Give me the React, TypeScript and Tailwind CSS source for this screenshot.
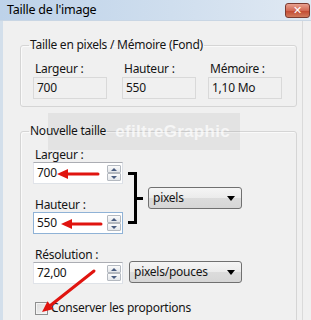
import React from "react";

function Spinner() {
  return (
    <div className="flex flex-col mr-[1px]">
      {[0, 1].map((i) => (
        <div
          key={i}
          className="w-[14px] h-[8px] border border-[#b4b9c0] rounded-[1px] bg-[linear-gradient(#fbfbfb,#e3e6ea)] flex items-center justify-center"
        >
          {i === 0 ? (
            <div className="w-0 h-0 border-l-[3px] border-r-[3px] border-b-[3px] border-l-transparent border-r-transparent border-b-[#4a5d80]" />
          ) : (
            <div className="w-0 h-0 border-l-[3px] border-r-[3px] border-t-[3px] border-l-transparent border-r-transparent border-t-[#4a5d80]" />
          )}
        </div>
      ))}
    </div>
  );
}

function SpinInput({ value, focused }: { value: string; focused?: boolean }) {
  return (
    <div
      className={
        focused
          ? "w-[90px] h-[22px] border border-[#8fb2d6] bg-white flex items-center justify-between"
          : "w-[90px] h-[22px] border border-[#abadb3] border-b-[#dfe3e8] border-l-[#e2e3ea] border-r-[#dbdfe6] bg-white flex items-center justify-between"
      }
    >
      <span className="pl-[3px] leading-none">{value}</span>
      <Spinner />
    </div>
  );
}

function Select({ label, w }: { label: string; w: string }) {
  return (
    <div
      className={
        w +
        " h-[22px] border border-[#707070] rounded-[3px] bg-[linear-gradient(#f5f5f5,#ebebeb_50%,#dcdcdc_51%,#d6d6d6)] flex items-center justify-between px-[4px]"
      }
    >
      <span className="leading-none">{label}</span>
      <div className="w-0 h-0 mr-[2px] border-l-[4px] border-r-[4px] border-t-[5px] border-l-transparent border-r-transparent border-t-black" />
    </div>
  );
}

export default function App() {
  return (
    <div className="relative w-[311px] h-[320px] overflow-hidden bg-[#f0f0f0] font-['Noto_Sans',sans-serif] text-[12px] tracking-[-0.25px] text-[#151515]">
      {/* Title bar */}
      <div className="h-[21px] flex items-center pl-[7px] pr-[1px] bg-[linear-gradient(90deg,#bdd2e9,#cfdeee_55%,#e0e9f3)] border-b border-[#c9d6e4]">
        <span className="leading-none text-black text-[12.5px]">Taille de l'image</span>
        <div className="ml-auto w-[25px] h-[15px] rounded-[3px] border border-[#7a3a30] bg-[linear-gradient(#e8a08f,#d26a55_50%,#c2462f_51%,#d07a5c)] flex items-center justify-center">
          <span className="text-white font-bold text-[11px] leading-none font-['DejaVu_Sans',sans-serif]">✕</span>
        </div>
      </div>

      {/* Body */}
      <div className="flex h-[299px]">
        <div className="w-[3px] bg-[#d3dfeb]" />
        <div className="w-[299px] pl-[17px]">
          {/* Group 1 */}
          <fieldset className="mt-[16px] w-[277px] border border-[#d5d5d5] rounded-[3px] shadow-[inset_1px_1px_0_#fafafa]">
            <legend className="ml-[8px] px-[1px] leading-[16px]">
              Taille en pixels / Mémoire (Fond)
            </legend>
            <div className="pl-[12px] pt-[8px] pb-[7px] grid grid-cols-[89px_86px_74px]">
              {[
                ["Largeur :", "700"],
                ["Hauteur :", "550"],
                ["Mémoire :", "1,10 Mo"],
              ].map(([l, v]) => (
                <div key={l}>
                  <div className="pl-[2px] leading-[16px]">{l}</div>
                  <div className="w-[74px] h-[22px] border border-[#d9d9d9] pl-[3px] flex items-center leading-none">
                    {v}
                  </div>
                </div>
              ))}
            </div>
          </fieldset>

          {/* Group 2 */}
          <fieldset className="mt-[16px] w-[277px] h-[220px] border border-[#d5d5d5] rounded-[3px] shadow-[inset_1px_1px_0_#fafafa]">
            <legend className="ml-[8px] px-[1px] leading-[16px]">Nouvelle taille</legend>
            <div className="pl-[12px] pt-[9px]">
              <div className="flex">
                <div className="w-[90px]">
                  <div className="pl-[2px] leading-[14px]">Largeur :</div>
                  <SpinInput value="700" />
                  <div className="pl-[2px] leading-[14px] mt-[14px]">Hauteur :</div>
                  <SpinInput value="550" focused />
                </div>
                <div className="flex items-center mt-[24px] h-[52px] ml-[5px]">
                  <div className="w-[9px] h-full border-y-[3px] border-r-[3px] border-black" />
                  <div className="w-[6px] h-[3px] bg-black" />
                  <div className="ml-[5px]">
                    <Select label="pixels" w="w-[94px]" />
                  </div>
                </div>
              </div>
              <div className="flex mt-[14px]">
                <div className="w-[90px]">
                  <div className="pl-[2px] leading-[14px]">Résolution :</div>
                  <SpinInput value="72,00" />
                </div>
                <div className="ml-[6px] mt-[13px]">
                  <Select label="pixels/pouces" w="w-[113px]" />
                </div>
              </div>
              <div className="flex items-center mt-[17px] ml-[2px]">
                <div className="w-[13px] h-[13px] border border-[#8e8f8f] bg-[linear-gradient(135deg,#dcdcdc,#f4f4f4)] shadow-[inset_0_0_0_1px_#f4f4f4]" />
                <span className="ml-[3px] leading-[14px]">Conserver les proportions</span>
              </div>
            </div>
          </fieldset>
        </div>
        <div className="w-[9px] border-l border-[#dadada]" />
      </div>

      {/* Watermark overlay */}
      <div className="absolute left-[48px] top-[113px] w-[192px] h-[37px] bg-black/[0.05] pointer-events-none flex items-center justify-end pr-[10px] overflow-hidden">
        <span className="text-[17px] font-bold text-white/70 font-['Liberation_Sans',sans-serif] tracking-[0.3px]">
          efiltreGraphic
        </span>
      </div>

      {/* Red arrows overlay */}
      <svg className="absolute left-0 top-0 pointer-events-none" width="311" height="320" viewBox="0 0 311 320">
        <g stroke="#e0140f" strokeWidth="3" fill="#e0140f" strokeLinecap="round">
          <line x1="98" y1="174" x2="66" y2="174" />
          <polygon points="57,174 68,169 68,179" stroke="none" />
          <line x1="101" y1="224" x2="70" y2="224" />
          <polygon points="61,224 72,219 72,229" stroke="none" />
          <line x1="94" y1="271" x2="51" y2="305" />
          <polygon points="42,312 53.7,309.1 47.5,301.3" stroke="none" />
        </g>
      </svg>
    </div>
  );
}
